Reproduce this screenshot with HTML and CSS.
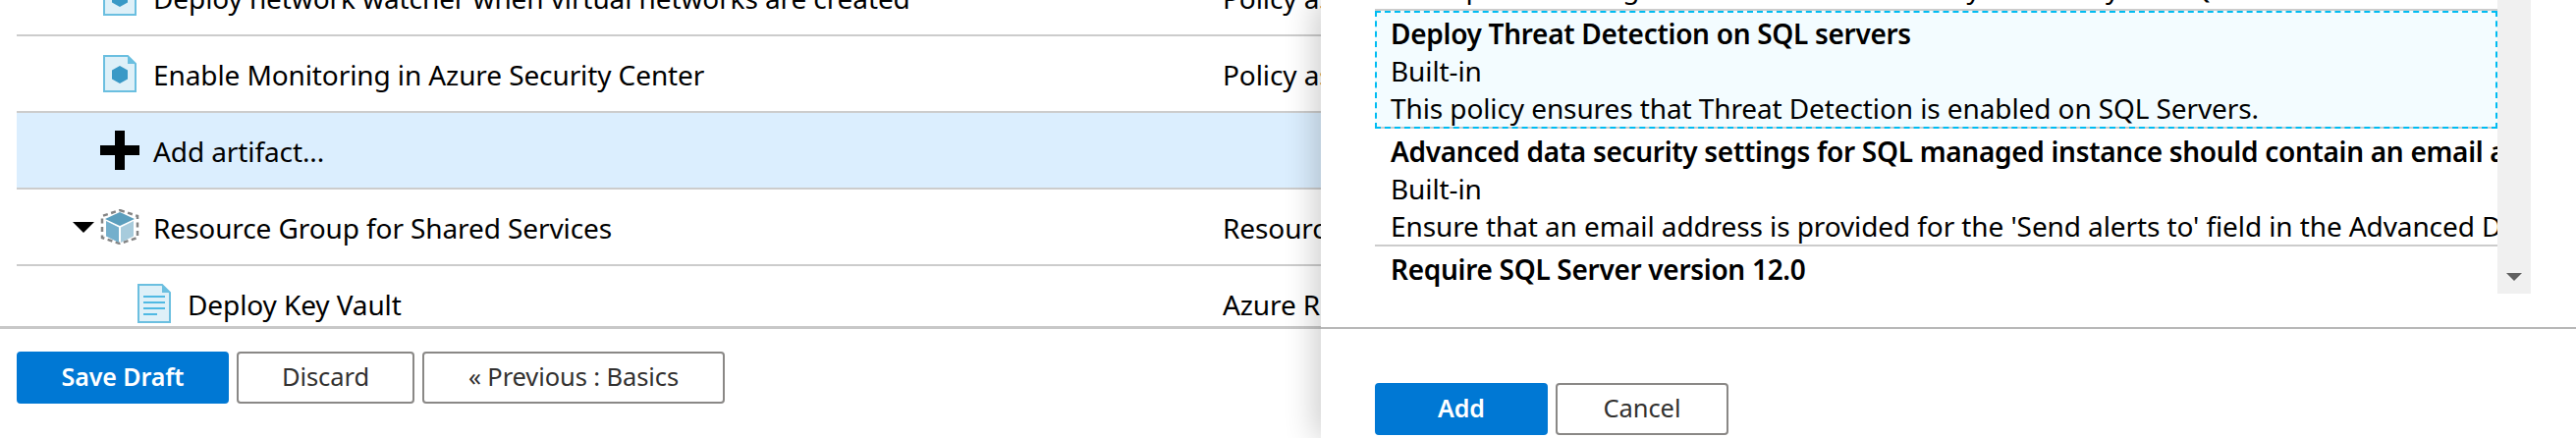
FILE: index.html
```
<!DOCTYPE html>
<html lang="en">
<head>
<meta charset="utf-8">
<title>Blueprint artifacts</title>
<link rel="stylesheet" href="styles.css">
</head>
<body>
<svg class="defs" width="0" height="0" aria-hidden="true">
  <symbol id="policy" viewBox="0 0 34 38">
    <path d="M1 1H25L33 9V37H1Z" fill="#def0f8" stroke="#6bbfe0" stroke-width="2"/>
    <path d="M25 1L33 9H25Z" fill="#6bbfe0"/>
    <path d="M17 11L25 15.500V24.500L17 29L9 24.500V15.500Z" fill="#3999c6"/>
  </symbol>
  <symbol id="doc" viewBox="0 0 34 40">
    <path d="M1 1H25L33 9V39H1Z" fill="#def0f8" stroke="#6bbfe0" stroke-width="2"/>
    <path d="M25 1L33 9H25Z" fill="#6bbfe0"/>
    <path d="M6 13H28M6 19H28M6 25H28M6 31H20" stroke="#4fb9e3" stroke-width="2" fill="none"/>
  </symbol>
  <symbol id="group" viewBox="0 0 40 36">
    <path d="M20 1L38 7V29L20 35L2 29V7Z" fill="none" stroke="#848484" stroke-width="2.500" stroke-dasharray="5 3.500"/>
    <path d="M20 3L35 10L20 17L5 10Z" fill="#5b9ebd"/>
    <path d="M6 12L19 18.500V34L6 27.500Z" fill="#74afcc"/>
    <path d="M34 12L21 18.500V34L34 27.500Z" fill="#a7cbdc"/>
  </symbol>
</svg>

<main class="page">
  <section class="tree">
    <div class="row row-first">
      <div class="lead"><svg class="ico-policy"><use href="#policy"/></svg></div>
      <div class="name">Deploy network watcher when virtual networks are created</div>
      <div class="type">Policy assignment</div>
    </div>
    <div class="row">
      <div class="lead"><svg class="ico-policy"><use href="#policy"/></svg></div>
      <div class="name">Enable Monitoring in Azure Security Center</div>
      <div class="type">Policy assignment</div>
    </div>
    <div class="row row-add">
      <div class="lead"><span class="plus"></span></div>
      <div class="name">Add artifact...</div>
      <div class="type"></div>
    </div>
    <div class="row">
      <div class="lead"><span class="caret"></span><svg class="ico-group"><use href="#group"/></svg></div>
      <div class="name">Resource Group for Shared Services</div>
      <div class="type">Resource group</div>
    </div>
    <div class="row">
      <div class="lead lead-child"><svg class="ico-doc"><use href="#doc"/></svg></div>
      <div class="name">Deploy Key Vault</div>
      <div class="type">Azure Resource Manager template</div>
    </div>
  </section>
  <footer class="actions">
    <button class="btn btn-primary btn-save">Save Draft</button>
    <button class="btn btn-discard">Discard</button>
    <button class="btn btn-prev">« Previous : Basics</button>
  </footer>
</main>

<aside class="panel">
  <div class="picker">
    <div class="list">
      <div class="item">
        <div class="title">Audit SQL server settings</div>
        <div>Built-in</div>
        <div>Audit periodical log is enabled on the hosts by admins by the SQL servers.</div>
      </div>
      <div class="item item-focus">
        <div class="title">Deploy Threat Detection on SQL servers</div>
        <div>Built-in</div>
        <div>This policy ensures that Threat Detection is enabled on SQL Servers.</div>
      </div>
      <div class="item">
        <div class="title">Advanced data security settings for SQL managed instance should contain an email address for security alerts</div>
        <div>Built-in</div>
        <div>Ensure that an email address is provided for the 'Send alerts to' field in the Advanced Data Security server settings.</div>
      </div>
      <div class="item">
        <div class="title">Require SQL Server version 12.0</div>
      </div>
    </div>
    <div class="scrollbar"><span class="arrow"></span></div>
  </div>
  <div class="panel-actions">
    <button class="btn btn-primary btn-add">Add</button>
    <button class="btn btn-cancel">Cancel</button>
  </div>
</aside>
</body>
</html>
```
FILE: styles.css
```
* { box-sizing: border-box; }
html, body { margin: 0; height: 446px; overflow: hidden; background: #fff; }
body {
  position: relative;
  width: 2623px;
  font-family: "Noto Sans", "Open Sans", sans-serif;
  font-size: 28px;
  letter-spacing: -0.1px;
  color: #000;
}
.defs { position: absolute; }

.tree { height: 335px; overflow: hidden; border-bottom: 3px solid #c8c8c8; padding-left: 17px; }
.row {
  position: relative;
  display: grid;
  grid-template-columns: 1228px 1fr;
  height: 78px;
  border-bottom: 2px solid #ccc;
}
.row-first { margin-top: -41px; }
.row-add { background: #dbeefe; }
.name, .type { white-space: nowrap; line-height: 78px; }
.name { display: flex; padding-left: 139px; }
.lead { position: absolute; left: 0; top: 0; height: 76px; display: flex; align-items: center; padding-left: 57px; }
.ico-policy { width: 34px; height: 38px; margin-left: 31px; }
.ico-group { width: 40px; height: 36px; margin-left: 6px; }
.ico-doc { width: 34px; height: 40px; margin-left: 66px; }
.lead-child + .name { padding-left: 174px; }
.caret { width: 0; height: 0; border-style: solid; border-width: 11px 11px 0; border-color: #000 transparent transparent; }
.plus {
  width: 40px; height: 40px; margin-left: 28px;
  background:
    linear-gradient(#000, #000) center / 10px 40px no-repeat,
    linear-gradient(#000, #000) center / 40px 10px no-repeat;
}

.actions { display: flex; gap: 8px; padding: 23px 0 0 17px; }
.btn {
  height: 53px;
  font: inherit;
  font-size: 25.500px;
  letter-spacing: -0.1px;
  border: 2px solid #8a8886;
  border-radius: 4px;
  background: #fff;
  color: #323130;
  padding: 0 0 3px;
}
.btn-primary { background: #0078d4; border-color: #0078d4; color: #fff; font-weight: 600; font-size: 25px; }
.btn-save { width: 216px; }
.btn-discard { width: 181px; }
.btn-prev { width: 308px; }
.btn-add { width: 176px; }
.btn-cancel { width: 176px; }

.panel {
  position: absolute;
  left: 1345px; top: 0; right: 0; bottom: 0;
  background: #fff;
  box-shadow: -6px 0 30px rgba(0, 0, 0, .2);
}
.picker {
  display: flex;
  height: 335px;
  padding: 0 46px 0 55px;
  border-bottom: 2px solid #b8b8b8;
  align-items: flex-start;
}
.list { width: 1143px; height: 299px; overflow: hidden; }
.item {
  height: 120px;
  padding: 4px 16px 0;
  line-height: 38px;
  white-space: nowrap;
  overflow: hidden;
  border-bottom: 2px solid #ccc;
}
.item:first-child { margin-top: -109px; padding-top: 1px; }
.item-focus { background: #f3fcff; outline: 2px dashed #00bcf2; outline-offset: -2px; }
.title { font-weight: 600; letter-spacing: -0.3px; }
.scrollbar { width: 34px; height: 299px; background: #f0f0f0; display: flex; justify-content: center; align-items: flex-end; padding-bottom: 13px; }
.arrow { width: 0; height: 0; border-style: solid; border-width: 8px 8px 0; border-color: #606060 transparent transparent; }
.panel-actions { display: flex; gap: 8px; padding: 55px 0 0 55px; }
```
